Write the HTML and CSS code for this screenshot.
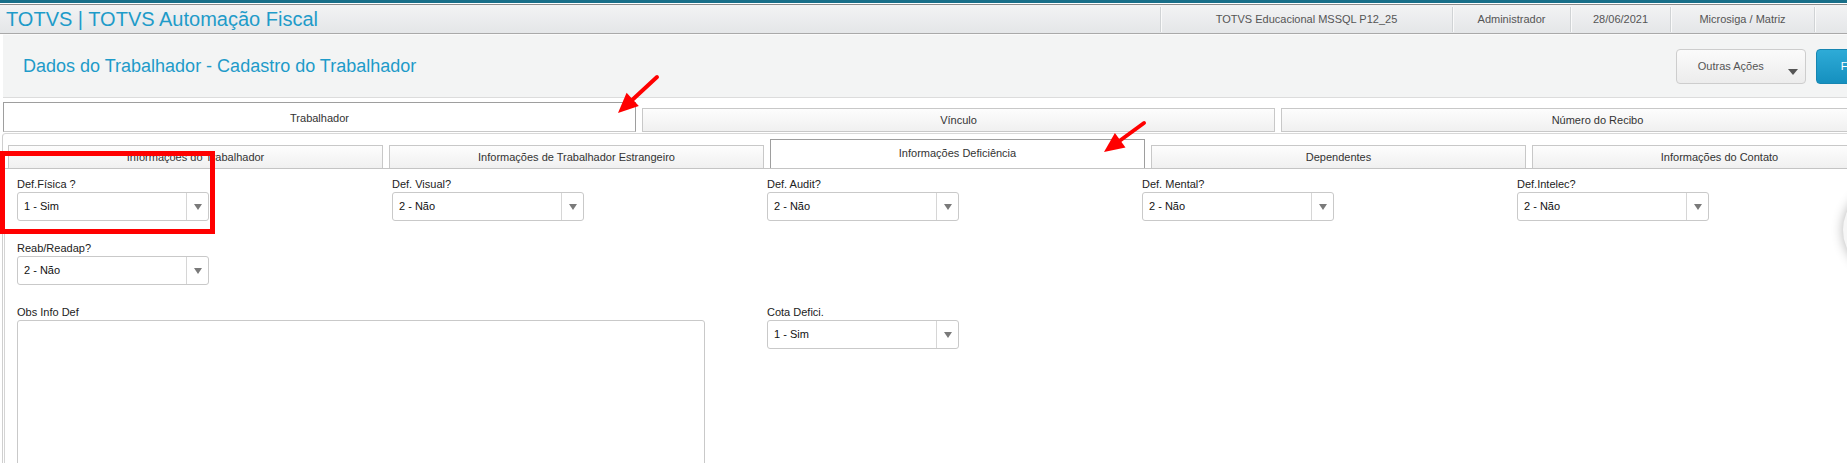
FILE: index.html
```html
<!DOCTYPE html>
<html lang="pt-br">
<head>
    <meta charset="UTF-8">
    <title>Dados do Trabalhador - Cadastro do Trabalhador</title>
    <link rel="stylesheet" href="styles.css">
</head>
<body>
<div class="page">
    <div class="topline"></div>

    <!-- Barra do sistema -->
    <header class="appbar">
        <div class="app-title">TOTVS | TOTVS Automação Fiscal</div>
        <ul class="app-info">
            <li class="info-env">TOTVS Educacional MSSQL P12_25</li>
            <li class="info-user">Administrador</li>
            <li class="info-date">28/06/2021</li>
            <li class="info-branch">Microsiga / Matriz</li>
            <li class="info-end"></li>
        </ul>
    </header>

    <!-- Cabeçalho da rotina -->
    <section class="page-head">
        <h1>Dados do Trabalhador - Cadastro do Trabalhador</h1>
        <div class="actions">
            <button type="button" class="btn-more">Outras Ações <span class="caret"></span></button>
            <button type="button" class="btn-primary">Fechar</button>
        </div>
    </section>

    <!-- Abas principais -->
    <div class="tab-strip main">
        <div class="tab active">Trabalhador</div>
        <div class="tab">Vínculo</div>
        <div class="tab">Número do Recibo</div>
    </div>
    <div class="tab-panel main">
        <div class="tab-strip sub">
            <div class="tab">Informações do Trabalhador</div>
            <div class="tab">Informações de Trabalhador Estrangeiro</div>
            <div class="tab active">Informações Deficiência</div>
            <div class="tab">Dependentes</div>
            <div class="tab">Informações do Contato</div>
        </div>
        <div class="tab-panel sub">
            <form class="form-grid">
                <div class="field">
                    <label>Def.Física ?</label>
                    <div class="select"><span class="value">1 - Sim</span><span class="arrow"></span></div>
                </div>
                <div class="field">
                    <label>Def. Visual?</label>
                    <div class="select"><span class="value">2 - Não</span><span class="arrow"></span></div>
                </div>
                <div class="field">
                    <label>Def. Audit?</label>
                    <div class="select"><span class="value">2 - Não</span><span class="arrow"></span></div>
                </div>
                <div class="field">
                    <label>Def. Mental?</label>
                    <div class="select"><span class="value">2 - Não</span><span class="arrow"></span></div>
                </div>
                <div class="field">
                    <label>Def.Intelec?</label>
                    <div class="select"><span class="value">2 - Não</span><span class="arrow"></span></div>
                </div>
                <div class="field field-row">
                    <label>Reab/Readap?</label>
                    <div class="select"><span class="value">2 - Não</span><span class="arrow"></span></div>
                </div>
                <div class="field field-wide">
                    <label>Obs Info Def</label>
                    <textarea></textarea>
                </div>
                <div class="field">
                    <label>Cota Defici.</label>
                    <div class="select"><span class="value">1 - Sim</span><span class="arrow"></span></div>
                </div>
            </form>
        </div>
    </div>
</div>

<!-- Botão flutuante parcialmente visível -->
<div class="float-btn"></div>

<!-- Marcações em vermelho -->
<div class="annot-box"></div>
<svg class="annot-arrows" width="1847" height="463" viewBox="0 0 1847 463">
    <line x1="657" y1="77" x2="630" y2="102" stroke="#ff0000" stroke-width="4" stroke-linecap="round"/>
    <polygon points="618,113 638.8,106 626.6,92.8" fill="#ff0000"/>
    <line x1="1144" y1="123" x2="1118" y2="142" stroke="#ff0000" stroke-width="4" stroke-linecap="round"/>
    <polygon points="1104,152 1125.5,147.6 1114.9,133" fill="#ff0000"/>
</svg>
</body>
</html>
```

FILE: styles.css
```css
body {
    margin: 0;
    width: 1847px;
    height: 463px;
    overflow: hidden;
    position: relative;
    background-color: #fff;
    font-family: "Liberation Sans", Arial, sans-serif;
    color: #333;
}

.page {
    width: 1914px;
}

/* Linha superior */
.topline {
    height: 3px;
    background-color: #186f89;
    border-bottom: 1px solid #fff;
}

/* Barra do sistema */
.appbar {
    display: flex;
    height: 28px;
    border-top: 1px solid #8c8c8c;
    border-bottom: 1px solid #a9a9a9;
    background: linear-gradient(#f2f3f4, #e4e6e8);
}

.app-title {
    width: 1160px;
    padding-left: 6px;
    box-sizing: border-box;
    font-size: 20px;
    line-height: 28px;
    color: #1e9bc9;
}

.app-info {
    display: flex;
    list-style: none;
    margin: 0;
    padding: 0;
}

.app-info li {
    margin-top: 2px;
    height: 25px;
    line-height: 25px;
    border-left: 1px solid #d0d3d5;
    box-shadow: inset 1px 0 #fafafa;
    font-size: 11px;
    color: #555;
    text-align: center;
}

.info-env { width: 291px; }
.info-user { width: 117px; }
.info-date { width: 99px; }
.info-branch { width: 143px; }
.info-end { width: 60px; }

/* Cabeçalho da rotina */
.page-head {
    display: flex;
    align-items: center;
    height: 64px;
    margin-left: 3px;
    border-top: 1px solid #fafafa;
    border-bottom: 1px solid #dcdcdc;
    background-color: #f3f4f4;
    box-sizing: border-box;
}

.page-head h1 {
    flex: 1;
    margin: 0;
    padding-left: 20px;
    font-size: 18px;
    font-weight: normal;
    color: #1e9bc9;
}

.actions {
    display: flex;
    gap: 10px;
    margin-right: 14px;
}

.btn-more {
    display: flex;
    align-items: center;
    width: 130px;
    height: 35px;
    padding: 0 7px 0 21px;
    border: 1px solid #cdcdcd;
    border-radius: 4px;
    background: linear-gradient(#fbfbfb, #ececec);
    font-family: inherit;
    font-size: 11px;
    color: #555;
}

.caret {
    margin-left: auto;
    align-self: flex-end;
    margin-bottom: 8px;
    border-left: 5px solid transparent;
    border-right: 5px solid transparent;
    border-top: 6px solid #555;
}

.btn-primary {
    height: 35px;
    padding: 0 24px;
    border: 1px solid #1686b2;
    border-radius: 4px;
    background: linear-gradient(#2eabd7, #1590bf);
    font-family: inherit;
    font-size: 11px;
    color: #fff;
}

/* Abas */
.tab-strip {
    display: flex;
    align-items: flex-end;
    gap: 6px;
}

.tab {
    flex: none;
    box-sizing: border-box;
    border: 1px solid #c8c8c8;
    background: linear-gradient(#fdfdfd, #f0f0f0);
    font-size: 11px;
    color: #333;
    text-align: center;
    display: flex;
    align-items: center;
    justify-content: center;
}

.tab.active {
    border-color: #9e9e9e;
    background: #fff;
}

.tab-strip.main {
    margin-top: 4px;
    padding-left: 3px;
}

.tab-strip.main .tab {
    width: 633px;
    height: 24px;
}

.tab-strip.main .tab.active {
    height: 30px;
    padding-top: 2px;
    border-bottom-color: #c8c8c8;
}

.tab-panel.main {
    margin-top: 1px;
    margin-left: 2px;
    border-top: 1px solid #d8d8d8;
    border-left: 1px solid #cfcfcf;
    border-top-left-radius: 4px;
}

.tab-strip.sub {
    padding: 5px 0 0 5px;
}

.tab-strip.sub .tab {
    width: 375px;
    height: 23px;
    border-bottom: none;
}

.tab-strip.sub .tab.active {
    height: 29px;
    padding-bottom: 2px;
}

.tab-panel.sub {
    margin-left: 1px;
    border-top: 1px solid #c4c4c4;
    border-left: 1px solid #d4d4d4;
    height: 320px;
}

/* Campos */
.form-grid {
    display: grid;
    grid-template-columns: repeat(5, 375px);
    row-gap: 20px;
    padding: 8px 0 0 12px;
    margin: 0;
}

.field label {
    display: block;
    font-size: 11px;
    line-height: 14px;
    margin-bottom: 1px;
    color: #222;
}

.field-row {
    grid-column: 1 / -1;
}

.field-wide {
    grid-column: 1 / span 2;
}

.select {
    display: flex;
    width: 192px;
    height: 29px;
    box-sizing: border-box;
    border: 1px solid #c9c9c9;
    border-radius: 3px;
    background-color: #fff;
}

.select .value {
    flex: 1;
    padding-left: 6px;
    font-size: 11px;
    line-height: 27px;
    color: #111;
}

.select .arrow {
    width: 21px;
    border-left: 1px solid #d6d6d6;
    display: flex;
    align-items: center;
    justify-content: center;
}

.select .arrow::after {
    content: "";
    border-left: 4px solid transparent;
    border-right: 4px solid transparent;
    border-top: 6px solid #7a7a7a;
}

textarea {
    display: block;
    width: 688px;
    height: 200px;
    box-sizing: border-box;
    border: 1px solid #c9c9c9;
    border-radius: 3px;
    resize: none;
}

/* Elementos sobrepostos */
.float-btn {
    position: absolute;
    left: 1843px;
    top: 186px;
    width: 88px;
    height: 88px;
    border-radius: 50%;
    background-color: #f6f6f6;
    box-shadow: 0 0 12px rgba(0, 0, 0, 0.3);
}

.annot-box {
    position: absolute;
    left: 0;
    top: 151px;
    width: 215px;
    height: 83px;
    box-sizing: border-box;
    border: 5px solid #ff0000;
}

.annot-arrows {
    position: absolute;
    left: 0;
    top: 0;
    pointer-events: none;
}
```
